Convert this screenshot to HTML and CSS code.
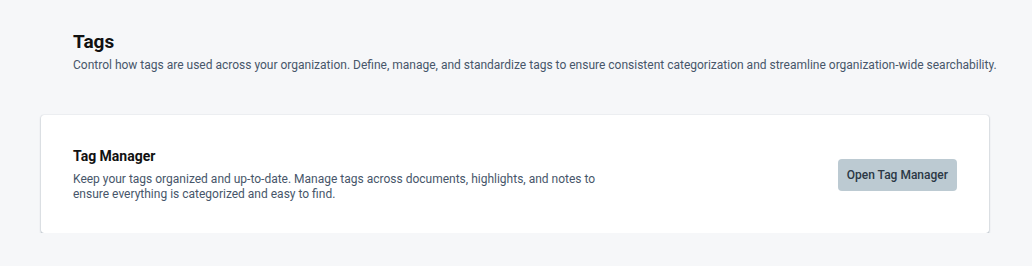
FILE: index.html
```html
<!DOCTYPE html>
<html lang="en">

<head>
    <meta charset="UTF-8">
    <meta name="viewport" content="width=device-width, initial-scale=1.0">
    <title>Tags</title>
    <link rel="stylesheet" href="styles.css">
</head>

<body>
    <div class="page">
        <div class="page-header">
            <h1>Tags</h1>
            <p>Control how tags are used across your organization. Define, manage, and standardize tags to ensure consistent categorization and streamline organization-wide searchability.</p>
        </div>

        <div class="card">
            <div class="card-text">
                <h3>Tag Manager</h3>
                <p>Keep your tags organized and up-to-date. Manage tags across documents, highlights, and notes to ensure everything is categorized and easy to find.</p>
            </div>
            <button class="open-btn">Open Tag Manager</button>
        </div>
    </div>
</body>

</html>
```

FILE: styles.css
```css
body {
    margin: 0;
    font-family: Roboto, "Noto Sans", sans-serif;
    background-color: #f6f7f9;
    color: #111;
}

.page {
    width: 948px;
    margin-left: 41px;
    padding-top: 30px;
}

.page-header {
    padding: 0 32px;
    /* description runs past the card edge */
    white-space: nowrap;
}

.page-header h1 {
    margin: 0;
    font-size: 19px;
    font-weight: 700;
    line-height: 24px;
}

.page-header p {
    margin: 3px 0 0;
    font-size: 12px;
    line-height: 16px;
    color: #47566a;
}

.card {
    margin-top: 42px;
    background-color: #fff;
    border-radius: 3px;
    box-shadow: 0 1px 2px rgba(60, 80, 100, 0.45), 0 0 1px rgba(60, 80, 100, 0.25);
    padding: 32px 32px 31px;
    display: flex;
    align-items: center;
    justify-content: space-between;
}

.card-text {
    width: 560px;
}

.card-text h3 {
    margin: 0;
    font-size: 14px;
    font-weight: 700;
    line-height: 18px;
}

.card-text p {
    margin: 7px 0 0;
    font-size: 12px;
    line-height: 15px;
    color: #47566a;
}

.open-btn {
    font-family: inherit;
    font-size: 12px;
    font-weight: 500;
    color: #2b3845;
    background-color: #bccad2;
    border: none;
    border-radius: 4px;
    height: 32px;
    padding: 0 9px;
}
```
